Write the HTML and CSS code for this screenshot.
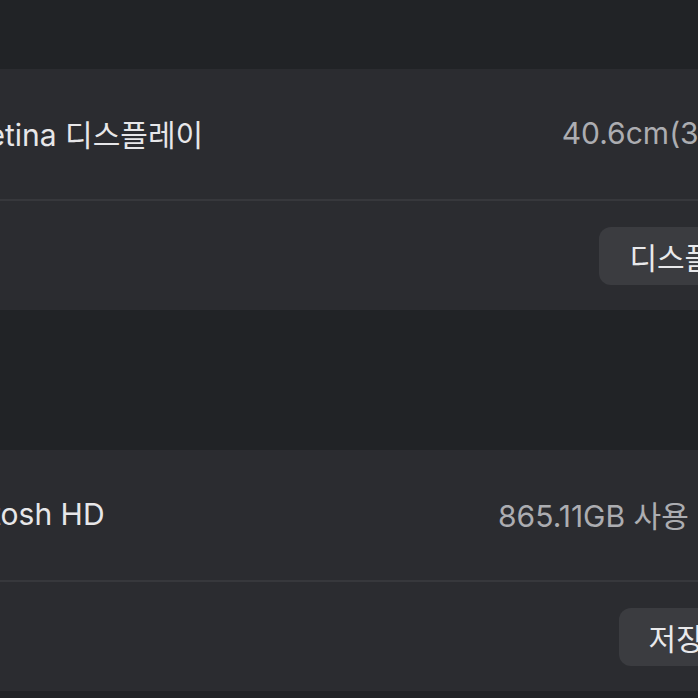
FILE: index.html
```html
<!DOCTYPE html>
<html lang="ko">
<head>
    <meta charset="UTF-8">
    <meta name="viewport" content="width=device-width, initial-scale=1.0">
    <title>정보</title>
    <link rel="stylesheet" href="styles.css">
</head>
<body>
    <div class="settings">
        <div class="group">
            <div class="row row-info">
                <span class="label">내장 Retina 디스플레이</span>
                <span class="value">40.6cm(3456 × 2234)</span>
            </div>
            <div class="row row-action">
                <button class="action-btn">디스플레이 설정...</button>
            </div>
        </div>

        <div class="group">
            <div class="row row-info">
                <span class="label">Macintosh HD</span>
                <span class="value">865.11GB 사용 가능 / 1.00TB</span>
            </div>
            <div class="row row-action">
                <button class="action-btn">저장 공간 설정...</button>
            </div>
        </div>
    </div>
</body>
</html>
```

FILE: styles.css
```css
* {
    margin: 0;
    padding: 0;
    box-sizing: border-box;
}

body {
    height: 100vh;
    overflow: hidden;
    background: #212326;
    font-family: 'Inter', 'Noto Sans CJK KR', sans-serif;
    color: #e7e7e9;
}

.settings {
    width: 982px;
    margin-left: -95px;
    padding-top: 69px;
    display: flex;
    flex-direction: column;
    gap: 140px;
}

.group {
    background: #2b2c30;
}

.row {
    display: flex;
    justify-content: space-between;
    align-items: center;
    font-size: 30px;
}

.row-info {
    height: 130px;
    padding-right: 10px;
    padding-bottom: 3px;
}

.row-action {
    height: 111px;
    justify-content: flex-end;
    border-top: 2px solid #37383c;
}

.label {
    color: #e7e7e9;
}

.value {
    color: #acadb1;
}

.action-btn {
    height: 58px;
    padding: 0 30px;
    border: none;
    border-radius: 12px;
    background: #3b3c40;
    color: #e9e9eb;
    font-family: inherit;
    font-size: 30px;
}
```
